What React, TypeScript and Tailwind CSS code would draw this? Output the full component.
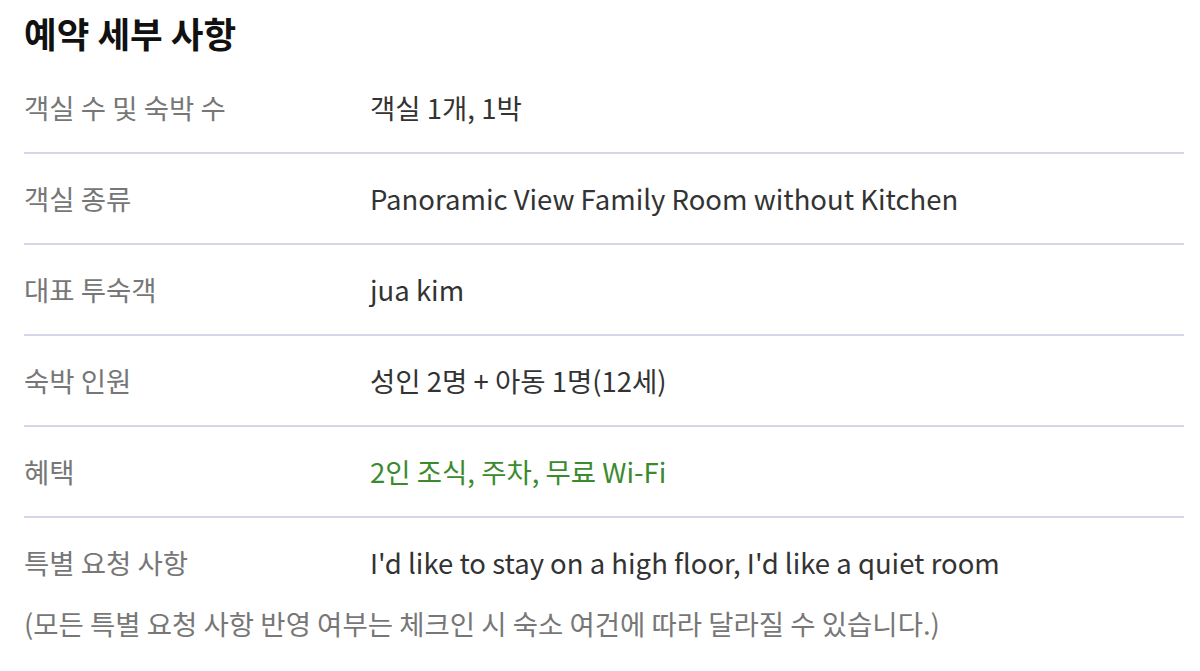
const FONT = "font-['Noto_Sans_CJK_KR','Noto_Sans',sans-serif]";

interface Row {
  label: string;
  value: string;
  green?: boolean;
}

const rows: Row[] = [
  { label: '객실 수 및 숙박 수', value: '객실 1개, 1박' },
  { label: '객실 종류', value: 'Panoramic View Family Room without Kitchen' },
  { label: '대표 투숙객', value: 'jua kim' },
  { label: '숙박 인원', value: '성인 2명 + 아동 1명(12세)' },
  { label: '혜택', value: '2인 조식, 주차, 무료 Wi-Fi', green: true },
  { label: '특별 요청 사항', value: "I'd like to stay on a high floor, I'd like a quiet room" },
];

export default function App() {
  return (
    <div className={`w-[1200px] h-[671px] bg-white pl-[24px] pr-[16px] overflow-hidden ${FONT}`}>
      {/* 제목 */}
      <h1 className="pt-[11px] h-[63px] text-[35.5px] leading-[44px] font-bold text-[#111]">예약 세부 사항</h1>

      <div className="flex flex-col">
        {rows.map((r, i) => (
          <div
            key={i}
            className={`flex pt-[26px] pb-[27px] text-[27.5px] leading-[36px] ${
              i < rows.length - 1 ? 'border-b-2 border-[#d4d7e8]' : ''
            }`}
          >
            <span className="w-[346px] shrink-0 text-[#777]">{r.label}</span>
            <span className={r.green ? 'text-[#3c8a2e]' : 'text-[#333]'}>{r.value}</span>
          </div>
        ))}
      </div>

      <p className="mt-[-2px] text-[27.5px] leading-[36px] text-[#777]">
        (모든 특별 요청 사항 반영 여부는 체크인 시 숙소 여건에 따라 달라질 수 있습니다.)
      </p>
    </div>
  );
}
